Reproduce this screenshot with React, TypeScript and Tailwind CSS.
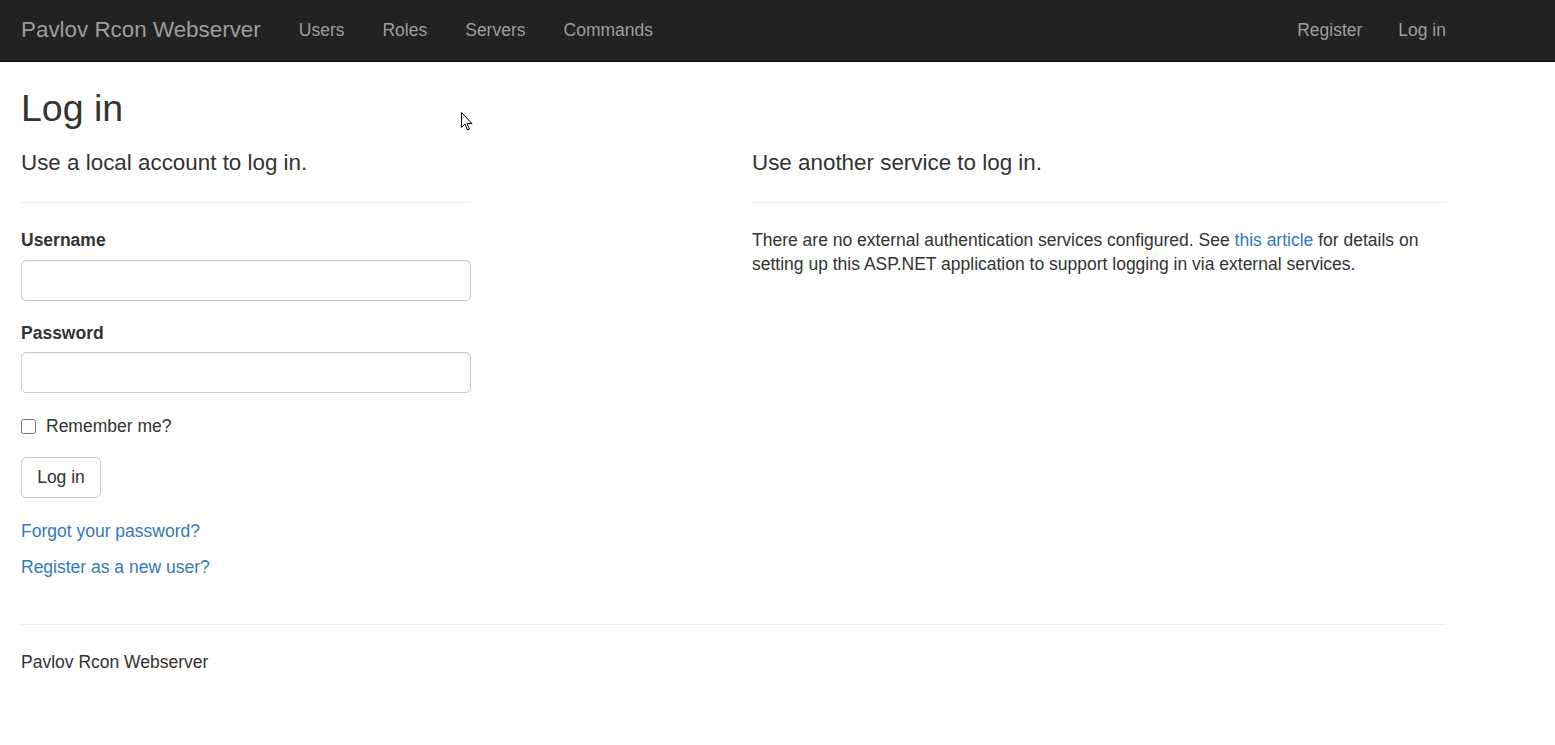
import { useState } from 'react';

const leftLinks = ['Users', 'Roles', 'Servers', 'Commands'];

export default function App() {
  const [remember, setRemember] = useState(false);

  return (
    <div className="relative min-h-[745px] bg-white font-['Liberation_Sans',Arial,sans-serif] text-[17.5px] leading-[24px] text-[#333]">
      <nav className="h-[62px] bg-[#222] border-b border-[#080808]">
        <div className="flex h-[60px] items-center ml-[21px] w-[1425px]">
          <a className="text-[22.4px] text-[#9d9d9d] mr-[19px]">Pavlov Rcon Webserver</a>
          <ul className="flex">
            {leftLinks.map((l) => (
              <li key={l}>
                <a className="px-[19px] text-[#9d9d9d]">{l}</a>
              </li>
            ))}
          </ul>
          <ul className="flex ml-auto">
            <li>
              <a className="px-[18px] text-[#9d9d9d]">Register</a>
            </li>
            <li>
              <a className="pl-[18px] text-[#9d9d9d]">Log in</a>
            </li>
          </ul>
        </div>
      </nav>

      <div className="ml-[21px] w-[1425px]">
        <h1 className="mt-[25px] text-[37.5px] leading-[42px]">Log in</h1>

        <div className="flex mt-[22px]">
          {/* local login */}
          <section className="w-[450px]">
            <h4 className="text-[22.4px] leading-[24.6px]">Use a local account to log in.</h4>
            <hr className="mt-[26px] border-t border-[#eee]" />

            <label className="block mt-[25px] font-bold">Username</label>
            <input className="block mt-[8px] w-full h-[41px] border border-[#ccc] rounded-[5px] px-[14px] shadow-[inset_0_1px_1px_rgba(0,0,0,0.075)]" />

            <label className="block mt-[20px] font-bold">Password</label>
            <input
              type="password"
              className="block mt-[7px] w-full h-[41px] border border-[#ccc] rounded-[5px] px-[14px] shadow-[inset_0_1px_1px_rgba(0,0,0,0.075)]"
            />

            <label className="flex items-center mt-[21px] h-[24px]">
              <input
                type="checkbox"
                checked={remember}
                onChange={(e) => setRemember(e.target.checked)}
                className="w-[15px] h-[15px] m-0 mt-[2px] mr-[10px]"
              />
              Remember me?
            </label>

            <button className="block mt-[19px] w-[80px] h-[41px] border border-[#ccc] rounded-[5px] bg-white text-[#333]">
              Log in
            </button>

            <p className="mt-[21px]">
              <a className="text-[#337ab7]">Forgot your password?</a>
            </p>
            <p className="mt-[12.5px]">
              <a className="text-[#337ab7]">Register as a new user?</a>
            </p>
          </section>

          {/* external login */}
          <section className="w-[694px] ml-[281px]">
            <h4 className="text-[22.4px] leading-[24.6px]">Use another service to log in.</h4>
            <hr className="mt-[26px] border-t border-[#eee]" />
            <p className="mt-[25px]">
              There are no external authentication services configured. See{' '}
              <a className="text-[#337ab7]">this article</a> for details on setting up this ASP.NET
              application to support logging in via external services.
            </p>
          </section>
        </div>

        <hr className="mt-[44.5px] border-t border-[#eee]" />
        <footer className="mt-[25px]">
          <p>Pavlov Rcon Webserver</p>
        </footer>
      </div>

      {/* mouse pointer captured in the screenshot */}
      <svg className="absolute left-[461px] top-[112px]" width="12" height="20" viewBox="0 0 12 20">
        <path d="M0.5 0.5 L0.5 15.5 L4 12 L6.5 18 L8.5 17 L6 11.5 L11 11.5 Z" fill="white" stroke="black" strokeWidth="1" />
      </svg>
    </div>
  );
}
